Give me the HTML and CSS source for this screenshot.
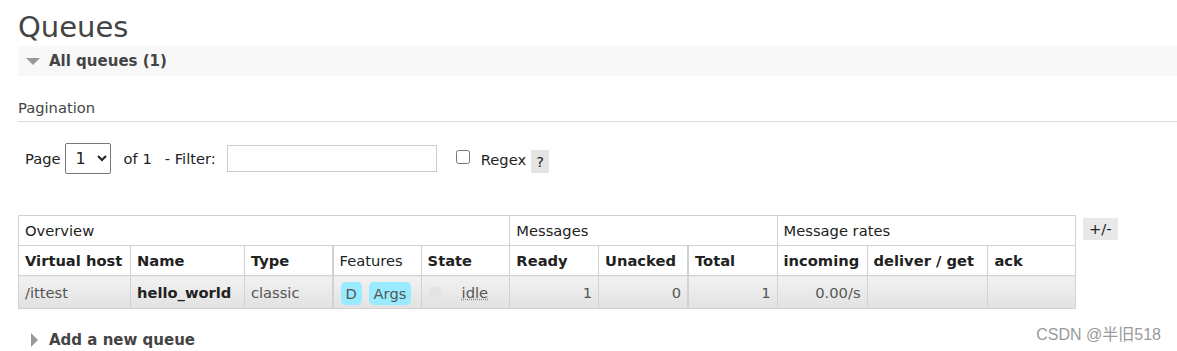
FILE: index.html
```html
<!DOCTYPE html>
<html lang="en">
<head>
    <meta charset="UTF-8">
    <title>Queues</title>
    <link rel="stylesheet" href="styles.css">
</head>
<body>
    <div class="main">
        <h1>Queues</h1>
        <div class="section">
            <h2 class="toggle open"><span class="arrow down"></span>All queues (1)</h2>
            <div class="pagination">
                <h3>Pagination</h3>
                <div class="filter-row">
                    <span>Page</span>
                    <select class="page-select"><option>1</option></select>
                    <span class="of">of 1</span>
                    <span>- Filter:</span>
                    <input type="text" class="filter-input">
                    <label class="regex"><input type="checkbox"> Regex</label>
                    <span class="help">?</span>
                </div>
            </div>
            <div class="table-wrap">
                <table class="list">
                    <thead>
                        <tr class="group">
                            <th colspan="5">Overview</th>
                            <th colspan="3">Messages</th>
                            <th colspan="3">Message rates</th>
                        </tr>
                        <tr class="cols">
                            <th class="w-vhost">Virtual host</th>
                            <th class="w-name">Name</th>
                            <th class="w-type">Type</th>
                            <th class="w-feat plain sep">Features</th>
                            <th class="w-state">State</th>
                            <th class="w-num">Ready</th>
                            <th class="w-num">Unacked</th>
                            <th class="w-num sep">Total</th>
                            <th class="w-rate">incoming</th>
                            <th class="w-deliver">deliver / get</th>
                            <th class="w-ack">ack</th>
                        </tr>
                    </thead>
                    <tbody>
                        <tr class="row">
                            <td>/ittest</td>
                            <td class="qname">hello_world</td>
                            <td>classic</td>
                            <td class="sep"><span class="badge">D</span> <span class="badge">Args</span></td>
                            <td><span class="state-box"></span><abbr>idle</abbr></td>
                            <td class="num">1</td>
                            <td class="num">0</td>
                            <td class="num sep">1</td>
                            <td class="num">0.00/s</td>
                            <td></td>
                            <td></td>
                        </tr>
                    </tbody>
                </table>
                <span class="plusminus">+/-</span>
            </div>
        </div>
        <h2 class="toggle closed"><span class="arrow right"></span>Add a new queue</h2>
    </div>
    <div class="watermark">CSDN @半旧518</div>
</body>
</html>
```

FILE: styles.css
```css
body {
    font-family: "DejaVu Sans", Verdana, sans-serif;
    font-size: 14.7px;
    color: #444;
    margin: 0;
    padding: 0;
    background: #fff;
    position: relative;
    height: 351px;
    overflow: hidden;
}
.main {
    padding: 0 0 0 18px;
}
h1 {
    font-size: 29px;
    font-weight: normal;
    margin: 0;
    padding-top: 10px;
    line-height: 34px;
    color: #444;
}
.toggle {
    display: flex;
    align-items: center;
    font-size: 15px;
    font-weight: bold;
    margin: 0;
    height: 30px;
}
.toggle.open {
    background: #f8f8f8;
    margin-top: 2px;
}
.arrow {
    width: 0;
    height: 0;
    margin: 0 9px 0 8px;
}
.arrow.down {
    border-left: 7px solid transparent;
    border-right: 7px solid transparent;
    border-top: 7px solid #999;
}
.arrow.right {
    border-top: 7px solid transparent;
    border-bottom: 7px solid transparent;
    border-left: 7px solid #999;
    margin: 0 11px 0 13px;
}
.pagination h3 {
    font-size: 14.7px;
    font-weight: normal;
    margin: 22px 0 0;
    padding-bottom: 3px;
    border-bottom: 1px solid #ddd;
    line-height: 20px;
}
.filter-row {
    display: flex;
    align-items: center;
    padding: 21px 0 0 7px;
    height: 30px;
    color: #222;
}
.page-select {
    font-family: "DejaVu Sans", Verdana, sans-serif;
    font-size: 16px;
    width: 46px;
    height: 31px;
    margin: 0 13px 0 4px;
    border: 1px solid #777;
    border-radius: 2px;
    background: #fff;
    color: #222;
    padding-left: 6px;
}
.of {
    margin-right: 13px;
}
.filter-input {
    width: 208px;
    height: 25px;
    border: 1px solid #ccc;
    margin: 0 0 0 11px;
    padding: 0;
    box-sizing: content-box;
}
.regex {
    display: flex;
    align-items: center;
    margin-left: 19px;
    padding-top: 3px;
}
.regex input {
    width: 14px;
    height: 14px;
    margin: 0 11px 6px 0;
}
.help {
    background: #e4e4e4;
    padding: 3px 5px;
    margin-left: 5px;
    margin-top: 6px;
}
.table-wrap {
    display: flex;
    align-items: flex-start;
    margin-top: 42px;
}
.list {
    border-collapse: collapse;
    width: 1058px;
    color: #222;
}
.list th, .list td {
    border: 1px solid #d2d2d2;
    text-align: left;
    padding: 0 6px;
    white-space: nowrap;
}
.list .sep {
    border-left: 2px solid #d2d2d2;
}
.group th {
    font-weight: normal;
    height: 29px;
}
.cols th {
    font-weight: bold;
    height: 29px;
}
.cols th.plain {
    font-weight: normal;
}
.w-vhost { width: 99px; }
.w-name { width: 101px; }
.w-type { width: 75px; }
.w-feat { width: 75px; }
.w-state { width: 76px; }
.w-num { width: 76px; }
.w-rate { width: 77px; }
.w-deliver { width: 108px; }
.w-ack { width: 75px; }
.row td {
    height: 32px;
    background: linear-gradient(#f2f2f2, #e2e2e2);
    color: #555;
}
.row td.qname {
    font-weight: bold;
    color: #222;
}
.row td.num {
    text-align: right;
}
.badge {
    display: inline-block;
    background: #99ebff;
    border-radius: 5px;
    padding: 2px 5px;
    line-height: 19px;
    margin: 2px 1px 0 1px;
}
.state-box {
    display: inline-block;
    width: 12px;
    height: 12px;
    background: #e4e4e4;
    margin: 0 21px 0 1px;
    vertical-align: -1px;
}
abbr {
    text-decoration: underline dotted #888;
}
.plusminus {
    background: #e8e8e8;
    margin: 3px 0 0 7px;
    padding: 2px 6px 3px;
    color: #222;
}
.toggle.closed {
    margin-top: 17px;
    height: 28px;
}
.watermark {
    position: absolute;
    right: 16px;
    bottom: 6px;
    font-family: "Liberation Sans", "Noto Sans CJK SC", sans-serif;
    font-size: 16px;
    color: #999;
}
```
